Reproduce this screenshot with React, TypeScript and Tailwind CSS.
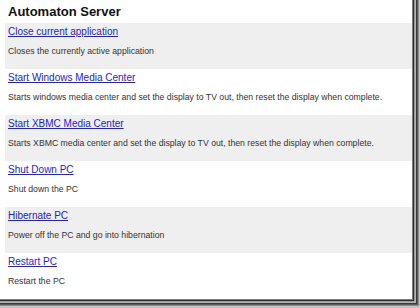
import React from "react";

const items = [
  { title: "Close current application", desc: "Closes the currently active application" },
  { title: "Start Windows Media Center", desc: "Starts windows media center and set the display to TV out, then reset the display when complete." },
  { title: "Start XBMC Media Center", desc: "Starts XBMC media center and set the display to TV out, then reset the display when complete." },
  { title: "Shut Down PC", desc: "Shut down the PC" },
  { title: "Hibernate PC", desc: "Power off the PC and go into hibernation" },
  { title: "Restart PC", desc: "Restart the PC" },
];

export default function App() {
  return (
    <div className="w-[420px] h-[308px] bg-white overflow-hidden" style={{ fontFamily: '"Liberation Sans", Arial, sans-serif' }}>
      <div className="w-[420px] h-[308px] border-r border-b-2 border-[#c4c4c4]">
        <div className="border-r border-b border-[#8c8c8c]">
          <div className="border-r border-b border-[#5a5a5a]">
            <div className="border-r border-b border-[#3a3a3a]">
              <div className="border-r border-b border-[#b2b2b2]">
                <div className="border-r border-b border-[#9a9a9a]">
                  <div className="border-r border-b border-[#2e2e2e]">
                    <div className="border-r border-b border-[#7c7c7c]">
                      <div className="w-[412px] h-[299px] bg-white flex flex-col overflow-hidden">
                        <h1 className="pl-[8px] pt-[4px] h-[23px] text-[13px] leading-[16px] font-bold text-[#111]">
                          Automaton Server
                        </h1>
                        {items.map((it, i) => (
                          <div
                            key={i}
                            className={`ml-[5px] h-[46px] pl-[3px] pt-[3px] shrink-0 ${i % 2 === 0 ? "bg-[#efefef]" : "bg-white"}`}
                          >
                            <a href="#" className="block w-fit text-[10px] leading-[12px] text-[#2222d4] underline">
                              {it.title}
                            </a>
                            <p className="mt-[8px] text-[8.7px] leading-[10px] text-[#333] whitespace-nowrap">
                              {it.desc}
                            </p>
                          </div>
                        ))}
                      </div>
                    </div>
                  </div>
                </div>
              </div>
            </div>
          </div>
        </div>
      </div>
    </div>
  );
}
